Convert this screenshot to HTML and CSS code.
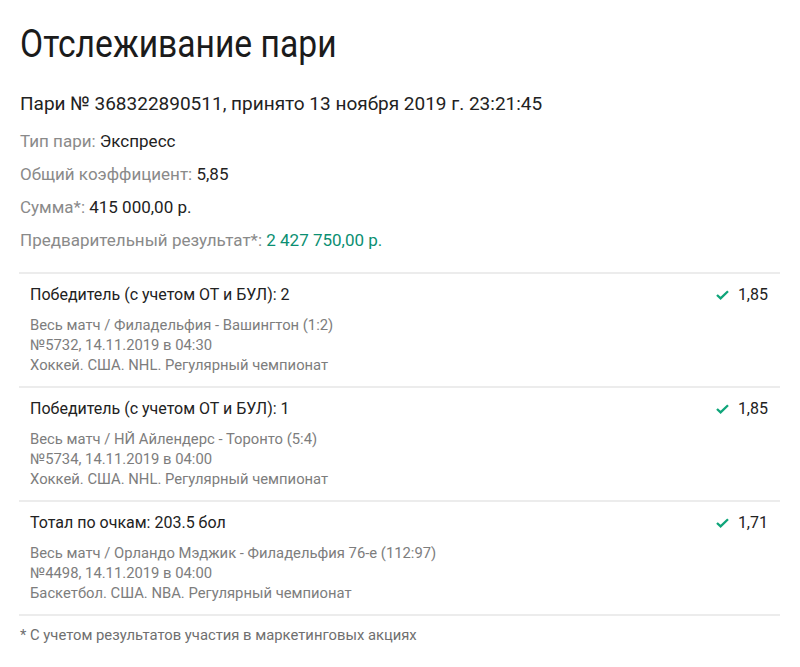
FILE: index.html
```html
<!DOCTYPE html>
<html lang="ru">
<head>
<meta charset="utf-8">
<title>Отслеживание пари</title>
<link rel="stylesheet" href="styles.css">
</head>
<body>
<div class="page">
  <h1 class="title"><span class="title-text">Отслеживание пари</span></h1>
  <div class="bet-id">Пари № 368322890511, принято 13 ноября 2019 г. 23:21:45</div>
  <div class="info">
    <div class="row"><span class="label">Тип пари:</span> <span class="value">Экспресс</span></div>
    <div class="row"><span class="label">Общий коэффициент:</span> <span class="value">5,85</span></div>
    <div class="row"><span class="label">Сумма*:</span> <span class="value">415 000,00 р.</span></div>
    <div class="row"><span class="label">Предварительный результат*:</span> <span class="value green">2 427 750,00 р.</span></div>
  </div>
  <div class="events">
    <div class="event">
      <div class="event-head">
        <div class="event-title">Победитель (с учетом ОТ и БУЛ): 2</div>
        <div class="odds"><svg class="check" width="13" height="10" viewBox="0 0 13 10"><path d="M1 5 L4.6 8.4 L12 1.2" fill="none" stroke="#0fa57a" stroke-width="2.3"/></svg>1,85</div>
      </div>
      <div class="meta">
        <div>Весь матч / Филадельфия - Вашингтон (1:2)</div>
        <div>№5732, 14.11.2019 в 04:30</div>
        <div>Хоккей. США. NHL. Регулярный чемпионат</div>
      </div>
    </div>
    <div class="event">
      <div class="event-head">
        <div class="event-title">Победитель (с учетом ОТ и БУЛ): 1</div>
        <div class="odds"><svg class="check" width="13" height="10" viewBox="0 0 13 10"><path d="M1 5 L4.6 8.4 L12 1.2" fill="none" stroke="#0fa57a" stroke-width="2.3"/></svg>1,85</div>
      </div>
      <div class="meta">
        <div>Весь матч / НЙ Айлендерс - Торонто (5:4)</div>
        <div>№5734, 14.11.2019 в 04:00</div>
        <div>Хоккей. США. NHL. Регулярный чемпионат</div>
      </div>
    </div>
    <div class="event">
      <div class="event-head">
        <div class="event-title">Тотал по очкам: 203.5 бол</div>
        <div class="odds"><svg class="check" width="13" height="10" viewBox="0 0 13 10"><path d="M1 5 L4.6 8.4 L12 1.2" fill="none" stroke="#0fa57a" stroke-width="2.3"/></svg>1,71</div>
      </div>
      <div class="meta">
        <div>Весь матч / Орландо Мэджик - Филадельфия 76-е (112:97)</div>
        <div>№4498, 14.11.2019 в 04:00</div>
        <div>Баскетбол. США. NBA. Регулярный чемпионат</div>
      </div>
    </div>
  </div>
  <div class="note">* С учетом результатов участия в маркетинговых акциях</div>
</div>
</body>
</html>
```
FILE: styles.css
```css
html, body {
  margin: 0;
  padding: 0;
  background: #fff;
}
body {
  font-family: Roboto, "Noto Sans", sans-serif;
  color: #222;
}
.page {
  padding: 0 20px 0 20px;
}
.title {
  margin: 21px 0 0 0;
  font-size: 38px;
  font-weight: 400;
  line-height: 46px;
  color: #1b1b1b;
}
.title-text {
  display: inline-block;
  transform: scaleX(0.885);
  transform-origin: left center;
}
.bet-id {
  margin-top: 25px;
  font-size: 19px;
  line-height: 24px;
  color: #222;
}
.info {
  margin-top: 9px;
}
.row {
  font-size: 17px;
  line-height: 33px;
}
.label {
  color: #8a8a8a;
}
.value {
  color: #222;
}
.green {
  color: #0b8f72;
}
.events {
  margin-top: 15px;
  margin-left: -1px;
  border-top: 2px solid #ececec;
}
.event {
  padding: 9px 12px 11px 11px;
  border-bottom: 2px solid #ececec;
}
.event-head {
  display: flex;
  justify-content: space-between;
  align-items: center;
  font-size: 16px;
  line-height: 24px;
  color: #222;
}
.odds {
  display: flex;
  align-items: center;
  gap: 9px;
  font-size: 16px;
}
.meta {
  margin-top: 8px;
  font-size: 14.8px;
  line-height: 20px;
  color: #7d7d7d;
}
.note {
  margin-top: 9px;
  font-size: 14.8px;
  line-height: 20px;
  color: #6f6f6f;
}
```
